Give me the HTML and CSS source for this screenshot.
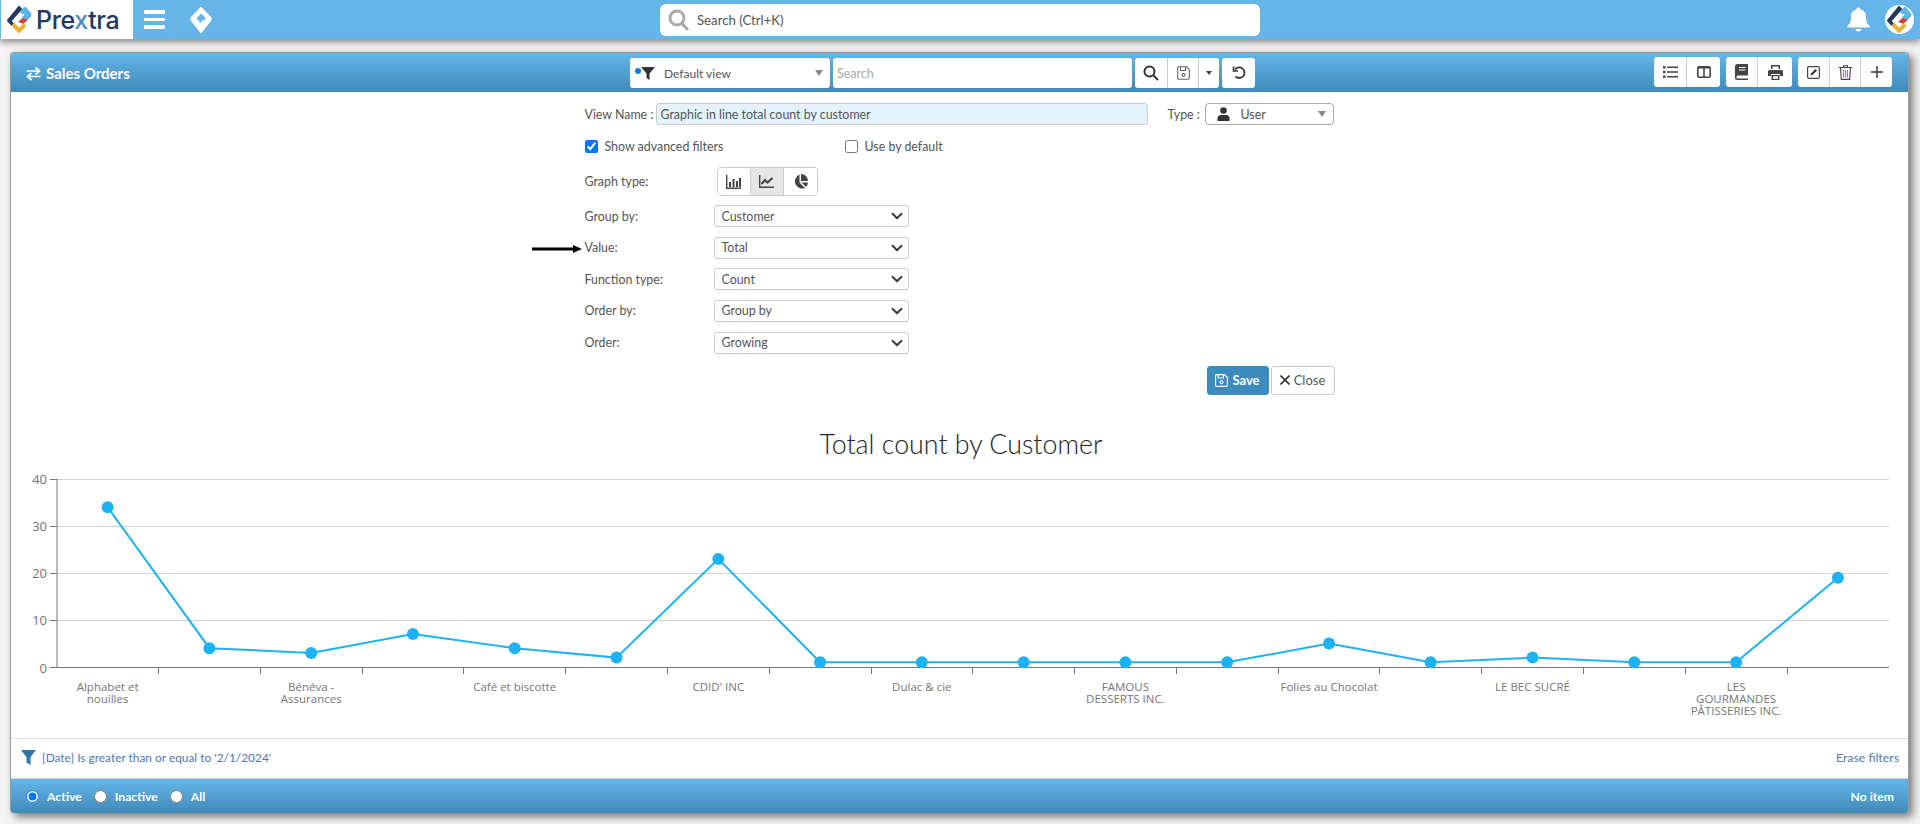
FILE: index.html
```html
<!DOCTYPE html>
<html lang="en">
<head>
  <meta charset="UTF-8">
  <meta name="viewport" content="width=device-width, initial-scale=1.0">
  <title>Sales Orders</title>
  <link rel="stylesheet" href="styles.css">
</head>
<body>
  <svg class="defs" width="0" height="0">
    <symbol id="mark" viewBox="0 0 26 30">
      <path d="M12.500 0.500 16 4 5 16.500 8 20 4.500 21.500 0.500 17Q-0.500 16 0.500 15Z" fill="#24375e"/>
      <path d="M16 4 19 1.500 25 8.500Q26 10 25 11.500L20.500 16.500 15.500 13 18.500 9.500 15.500 9.500 13.500 7Z" fill="#5eb3e6"/>
      <path d="M4.500 21.500 7.500 18 12.500 23.500 17 19 20.500 21.500 12.500 29.500Z" fill="#eab334"/>
      <path d="M11.500 17.500 16 13.500 21.500 15.500 17 19.500Z" fill="#d83a3a"/>
    </symbol>
  </svg>

  <header class="topbar">
    <div class="topbar__left">
      <a class="brand">
        <svg class="brand__mark"><use href="#mark"/></svg>
        <span class="brand__name">Pre<span class="brand__x">x</span>tra</span>
      </a>
      <button class="menu-btn"><span></span><span></span><span></span></button>
      <div class="home-icon">
        <svg width="22" height="28" viewBox="0 0 22 28"><path d="M11 0.500 21 11Q22.500 13 21 15L11 27.500 1 15Q-0.500 13 1 11Z M11 7.500 6.500 12.500 11 17 12 14.500 15 14 15.500 12Z" fill="#fff" fill-rule="evenodd"/></svg>
      </div>
    </div>
    <div class="global-search">
      <svg width="21" height="22" viewBox="0 0 21 22" fill="none" stroke="#aaa" stroke-width="3"><circle cx="9" cy="9" r="7"/><path d="M14 14.500 20 21"/></svg>
      <span>Search (Ctrl+K)</span>
    </div>
    <div class="topbar__right">
      <svg class="bell" width="23" height="25" viewBox="0 0 23 25" fill="#fff"><path d="M11.500 0.500C12.800 0.500 13.500 1.300 13.500 2.500 17 3.300 19 6 19 10 19 15 20.500 17 22.500 19L22.500 20.500H0.500V19C2.500 17 4 15 4 10 4 6 6 3.300 9.500 2.500 9.500 1.300 10.200 0.500 11.500 0.500Z"/><path d="M8.500 22H14.500C14.500 23.500 13 24.500 11.500 24.500S8.500 23.500 8.500 22Z"/></svg>
      <div class="avatar"><svg width="25" height="29"><use href="#mark"/></svg></div>
    </div>
  </header>

  <main class="page">
    <section class="card">
      <div class="card__head">
        <div class="card__title">
          <svg width="15" height="15" viewBox="0 0 15 15" fill="none" stroke="#fff" stroke-width="1.700"><path d="M0.500 5H13M9.500 1.500 13.500 5 9.500 8.500M14.500 10.500H2M5.500 7 1.500 10.500 5.500 14"/></svg>
          <span>Sales Orders</span>
        </div>
        <div class="view-select">
          <i class="view-select__dot"></i>
          <svg width="14" height="13" viewBox="0 0 14 13" fill="#333"><path d="M0 0H14L8.500 6.500V13L5.500 11V6.500Z"/></svg>
          <span class="view-select__text">Default view</span>
          <i class="caret caret--gray"></i>
        </div>
        <input class="view-search" type="text" placeholder="Search">
        <div class="btn-group">
          <button class="btn-group__item btn-w33">
            <svg width="16" height="16" viewBox="0 0 16 16" fill="none" stroke="#333" stroke-width="2"><circle cx="6.500" cy="6.500" r="5"/><path d="M10.500 10.500 15 15"/></svg>
          </button>
          <button class="btn-group__item btn-w31">
            <svg width="13" height="14" viewBox="0 0 13 14" fill="none" stroke="#666" stroke-width="1.100"><path d="M1.500 0.700H9.500L12.300 3.500V11.800Q12.300 13.300 11 13.300H2Q0.700 13.300 0.700 12V1.500Z"/><path d="M3.500 1V4.500H8.500V1"/><circle cx="6.500" cy="9" r="1.500"/></svg>
          </button>
          <button class="btn-group__item btn-w20"><i class="caret caret--dark"></i></button>
        </div>
        <div class="btn-group">
          <button class="btn-group__item btn-w33">
            <svg width="14" height="14" viewBox="0 0 14 14" fill="none" stroke="#333" stroke-width="1.800"><path d="M3.500 10.500A5.300 5.300 0 1 0 3 3.500"/><path d="M1.500 0.500V5H6" stroke-width="1.600"/></svg>
          </button>
        </div>
        <div class="card__actions">
          <div class="btn-group">
            <button class="btn-group__item btn-w33">
              <svg width="15" height="12" viewBox="0 0 15 12" fill="#444"><path d="M0 0H2.500V2.500H0ZM0 4.700H2.500V7.200H0ZM0 9.400H2.500V11.900H0ZM4 0.500H15V2H4ZM4 5.200H15V6.700H4ZM4 9.900H15V11.400H4Z"/></svg>
            </button>
            <button class="btn-group__item btn-w33">
              <svg width="14" height="12" viewBox="0 0 14 12" fill="none" stroke="#444"><rect x="0.800" y="0.800" width="12.400" height="10.400" rx="1.500" stroke-width="1.600"/><path d="M7 1V11" stroke-width="1.600"/><path d="M1 1.500H13" stroke-width="2"/></svg>
            </button>
          </div>
          <div class="btn-group">
            <button class="btn-group__item btn-w32">
              <svg width="13" height="16" viewBox="0 0 13 16"><path d="M2.500 0H13V11.500H2.500Q1.500 11.500 1.500 13T2.500 14.500H13V16H2.500Q0 16 0 13.500V2.500Q0 0 2.500 0Z" fill="#444"/><path d="M4 3.500H10.500M4 6H10.500" stroke="#fff" stroke-width="1.200"/></svg>
            </button>
            <button class="btn-group__item btn-w34">
              <svg width="15" height="15" viewBox="0 0 15 15" fill="#444"><path d="M3 0H12V4H10.500V1.500H4.500V4H3Z"/><path d="M1.500 5H13.500Q15 5 15 6.500V11H12V9H3V11H0V6.500Q0 5 1.500 5Z"/><path d="M3.500 10H11.500V15H3.500ZM5 11.300V13.700H10V11.300Z" fill-rule="evenodd"/></svg>
            </button>
          </div>
          <div class="btn-group">
            <button class="btn-group__item btn-w32">
              <svg width="13" height="13" viewBox="0 0 13 13"><rect x="0.600" y="0.600" width="11.800" height="11.800" rx="1.500" fill="none" stroke="#444" stroke-width="1.200"/><path d="M3.500 9.500 4 7.500 8.500 3 10 4.500 5.500 9Z" fill="#333"/></svg>
            </button>
            <button class="btn-group__item btn-w31">
              <svg width="13" height="15" viewBox="0 0 13 15" fill="none" stroke="#444" stroke-width="1.100"><path d="M0 2.500H13M4.500 2.500V0.800H8.500V2.500"/><path d="M1.500 2.500 2.300 14.400H10.700L11.500 2.500"/><path d="M4.500 5V12.500M6.500 5V12.500M8.500 5V12.500" stroke="#8a7aa8"/></svg>
            </button>
            <button class="btn-group__item btn-w31">
              <svg width="12" height="12" viewBox="0 0 12 12" fill="none" stroke="#333" stroke-width="1.400"><path d="M6 0V12M0 6H12"/></svg>
            </button>
          </div>
        </div>
      </div>

      <div class="view-form">
        <div class="form-row form-row--name">
          <label class="form-row__name">View Name :</label>
          <input class="name-input" type="text" value="Graphic in line total count by customer">
          <label class="form-row__type">Type :</label>
          <div class="type-select">
            <svg width="13" height="14" viewBox="0 0 13 14" fill="#333"><circle cx="6.500" cy="3.500" r="3.300"/><path d="M0.500 14V11.500Q0.500 8 4 8H9Q12.500 8 12.500 11.500V14Z"/></svg>
            <span>User</span>
            <i class="caret caret--gray"></i>
          </div>
        </div>
        <div class="check-row">
          <label class="check check--first"><input type="checkbox" checked>Show advanced filters</label>
          <label class="check"><input type="checkbox">Use by default</label>
        </div>
        <div class="field-list">
          <div class="field field--graph">
            <span class="field__label">Graph type:</span>
            <div class="graph-types">
              <button class="graph-types__item">
                <svg width="15" height="14" viewBox="0 0 15 14"><path d="M0.700 0V13.300H15" fill="none" stroke="#444" stroke-width="1.400"/><path d="M3 7H5V12H3ZM6.500 4H8.500V12H6.500ZM10 6H12V12H10ZM13 3H15V12H13Z" fill="#444"/></svg>
              </button>
              <button class="graph-types__item graph-types__item--on">
                <svg width="15" height="13" viewBox="0 0 15 13" fill="none" stroke="#444"><path d="M0.700 0V12.300H15" stroke-width="1.400"/><path d="M2.500 9 6 5 8.500 7.500 13.500 3" stroke-width="2"/></svg>
              </button>
              <button class="graph-types__item">
                <svg width="15" height="15" viewBox="0 0 15 15" fill="#444"><path d="M6.500 0.500V8.500L12 14A7 7 0 1 1 6.500 0.500Z"/><path d="M8 0A7 7 0 0 1 15 7H8Z"/><path d="M8.500 8.500H15A7 7 0 0 1 13 13Z"/></svg>
              </button>
            </div>
          </div>
          <div class="field">
            <span class="field__label">Group by:</span>
            <select class="field__select"><option>Customer</option></select>
          </div>
          <div class="field">
            <span class="field__label">Value:</span>
            <select class="field__select"><option>Total</option></select>
            <svg class="field__arrow" width="50" height="10" viewBox="0 0 50 10"><path d="M0 3.500H41V1L50 5 41 9V6.500H0Z" fill="#000"/></svg>
          </div>
          <div class="field">
            <span class="field__label">Function type:</span>
            <select class="field__select"><option>Count</option></select>
          </div>
          <div class="field">
            <span class="field__label">Order by:</span>
            <select class="field__select"><option>Group by</option></select>
          </div>
          <div class="field">
            <span class="field__label">Order:</span>
            <select class="field__select"><option>Growing</option></select>
          </div>
        </div>
        <div class="form-actions">
          <button class="btn btn--save">
            <svg width="13" height="13" viewBox="0 0 13 13" fill="none" stroke="#fff" stroke-width="1.100"><path d="M1.500 0.600H9.500L12.400 3.500V11.500Q12.400 12.400 11.500 12.400H1.500Q0.600 12.400 0.600 11.500V1.500Q0.600 0.600 1.500 0.600Z"/><path d="M3.200 1V4H8.500V1"/><circle cx="6.500" cy="8.300" r="1.500"/></svg>
            Save
          </button>
          <button class="btn btn--close">
            <svg width="10" height="10" viewBox="0 0 10 10" fill="none" stroke="#333" stroke-width="1.600"><path d="M0.500 0.500 9.500 9.500M9.500 0.500 0.500 9.500"/></svg>
            Close
          </button>
        </div>
      </div>

      <svg class="chart" width="1897" height="325" viewBox="11 413 1897 325">
        <text class="chart__title" x="961" y="454" text-anchor="middle">Total count by Customer</text>
        <path class="chart__grid" d="M57 479.500H1889M57 526.500H1889M57 573.500H1889M57 620.500H1889"/>
        <path class="chart__axis" d="M57 479V667.500M57 667.500H1889M50 479.500H57M50 526.500H57M50 573.500H57M50 620.500H57M50 667.500H57M158.500 667V674M260.500 667V674M362.500 667V674M463.500 667V674M565.500 667V674M667.500 667V674M769.500 667V674M871.500 667V674M972.500 667V674M1074.500 667V674M1176.500 667V674M1278.500 667V674M1379.500 667V674M1481.500 667V674M1583.500 667V674M1685.500 667V674M1787.500 667V674"/>
        <g class="chart__ylabels" text-anchor="end">
          <text x="47" y="484">40</text>
          <text x="47" y="531">30</text>
          <text x="47" y="578">20</text>
          <text x="47" y="625">10</text>
          <text x="47" y="673">0</text>
        </g>
        <polyline class="chart__line" points="107.600,507.200 209.400,648.200 311.200,652.900 412.900,634.100 514.700,648.200 616.500,657.600 718.300,558.900 820.100,662.300 921.800,662.300 1023.600,662.300 1125.400,662.300 1227.200,662.300 1329,643.500 1430.700,662.300 1532.500,657.600 1634.300,662.300 1736.100,662.300 1837.900,577.700"/>
        <g class="chart__points">
          <circle cx="107.600" cy="507.200" r="6"/>
          <circle cx="209.400" cy="648.200" r="6"/>
          <circle cx="311.200" cy="652.900" r="6"/>
          <circle cx="412.900" cy="634.100" r="6"/>
          <circle cx="514.700" cy="648.200" r="6"/>
          <circle cx="616.500" cy="657.600" r="6"/>
          <circle cx="718.300" cy="558.900" r="6"/>
          <circle cx="820.100" cy="662.300" r="6"/>
          <circle cx="921.800" cy="662.300" r="6"/>
          <circle cx="1023.600" cy="662.300" r="6"/>
          <circle cx="1125.400" cy="662.300" r="6"/>
          <circle cx="1227.200" cy="662.300" r="6"/>
          <circle cx="1329" cy="643.500" r="6"/>
          <circle cx="1430.700" cy="662.300" r="6"/>
          <circle cx="1532.500" cy="657.600" r="6"/>
          <circle cx="1634.300" cy="662.300" r="6"/>
          <circle cx="1736.100" cy="662.300" r="6"/>
          <circle cx="1837.900" cy="577.700" r="6"/>
        </g>
        <g class="chart__xlabels" text-anchor="middle">
          <text x="107.600" y="691">Alphabet et</text>
          <text x="107.600" y="703">nouilles</text>
          <text x="311.200" y="691">Bénéva -</text>
          <text x="311.200" y="703">Assurances</text>
          <text x="514.700" y="691">Café et biscotte</text>
          <text x="718.300" y="691">CDID' INC</text>
          <text x="921.800" y="691">Dulac &amp; cie</text>
          <text x="1125.400" y="691">FAMOUS</text>
          <text x="1125.400" y="703">DESSERTS INC.</text>
          <text x="1329" y="691">Folies au Chocolat</text>
          <text x="1532.500" y="691">LE BEC SUCRÉ</text>
          <text x="1736.100" y="691">LES</text>
          <text x="1736.100" y="703">GOURMANDES</text>
          <text x="1736.100" y="715">PÂTISSERIES INC.</text>
        </g>
      </svg>

      <div class="filter-bar">
        <svg width="15" height="15" viewBox="0 0 15 15" fill="#2f75ad"><path d="M0 0H15L9.500 7V15L5.500 12.500V7Z"/></svg>
        <span class="filter-bar__text">[Date] Is greater than or equal to '2/1/2024'</span>
        <a class="filter-bar__erase">Erase filters</a>
      </div>

      <div class="card__foot">
        <label class="foot-radio"><input type="radio" name="state" checked>Active</label>
        <label class="foot-radio"><input type="radio" name="state">Inactive</label>
        <label class="foot-radio"><input type="radio" name="state">All</label>
        <span class="card__count">No item</span>
      </div>
    </section>
  </main>
</body>
</html>
```

FILE: styles.css
```css
* {
  box-sizing: border-box;
}
html, body {
  margin: 0;
  height: 100%;
}
body {
  background: #f4f4f4;
  font-family: "Lato", "Liberation Sans", sans-serif;
  font-size: 12.400px;
  color: #555;
  overflow: hidden;
}
button {
  font-family: inherit;
  cursor: pointer;
}
.defs {
  position: absolute;
}

/* top bar */
.topbar {
  height: 39px;
  display: grid;
  grid-template-columns: 660px 600px 1fr;
  align-items: center;
  background: #65b5e8;
  box-shadow: 0 3px 7px rgba(0, 0, 0, .45);
  position: relative;
}
.topbar__left {
  display: flex;
  height: 39px;
}
.brand {
  width: 133px;
  display: flex;
  align-items: center;
  gap: 4px;
  padding-left: 6px;
  background: #fff;
  border-left: 1px solid #65b5e8;
}
.brand__mark {
  width: 25px;
  height: 29px;
}
.brand__name {
  font-family: "Inter", "Liberation Sans", sans-serif;
  font-size: 25px;
  font-weight: 500;
  letter-spacing: -0.4px;
  color: #24375e;
}
.brand__x {
  color: #4f8fc4;
}
.menu-btn {
  width: 43px;
  display: flex;
  flex-direction: column;
  justify-content: center;
  align-items: center;
  gap: 4px;
  padding: 0;
  background: none;
  border: 0;
  border-right: 1px solid #8fa9bd;
}
.menu-btn span {
  display: block;
  width: 21px;
  height: 3.500px;
  border-radius: 1px;
  background: #fff;
}
.home-icon {
  width: 49px;
  display: flex;
  align-items: center;
  justify-content: center;
}
.global-search {
  height: 32px;
  display: flex;
  align-items: center;
  gap: 8px;
  padding-left: 8px;
  background: #fff;
  border-radius: 6px;
  font-size: 13.200px;
  color: #555;
}
.topbar__right {
  display: flex;
  justify-content: flex-end;
  align-items: center;
  gap: 15px;
  padding-right: 6px;
}
.avatar {
  width: 29px;
  height: 29px;
  display: flex;
  align-items: center;
  justify-content: center;
  border-radius: 50%;
  background: #fff;
}

/* card */
.page {
  padding: 13px 11px 0 10px;
}
.card {
  height: 761px;
  display: flex;
  flex-direction: column;
  background: #fff;
  border: 1px solid #999;
  border-bottom: 0;
  border-radius: 4px;
  box-shadow: 4px 4px 8px rgba(0, 0, 0, .5);
}
.card__head {
  flex: none;
  height: 39px;
  display: flex;
  align-items: center;
  gap: 3px;
  padding: 1px 16px 0 0;
  background: linear-gradient(#65b5e8, #3f8ab9);
  border-radius: 3px 3px 0 0;
}
.card__title {
  width: 616px;
  display: flex;
  align-items: center;
  gap: 5px;
  padding-left: 15px;
  font-size: 15px;
  font-weight: 700;
  color: #fff;
}
.view-select {
  width: 200px;
  height: 30px;
  display: flex;
  align-items: center;
  padding: 0 7px 0 5px;
  background: #fff;
  border-radius: 3px;
  position: relative;
}
.view-select__dot {
  width: 6px;
  height: 6px;
  margin-bottom: 5px;
  border-radius: 50%;
  background: #0a7cf0;
}
.view-select__text {
  margin-left: 9px;
  font-size: 12px;
}
.caret {
  display: block;
  width: 0;
  height: 0;
  border-left: 4px solid transparent;
  border-right: 4px solid transparent;
  border-top: 6px solid #888;
}
.caret--gray {
  margin-left: auto;
}
.caret--dark {
  border-top-color: #444;
  border-left-width: 3.500px;
  border-right-width: 3.500px;
  border-top-width: 4px;
}
.view-search {
  width: 299px;
  height: 30px;
  padding: 0 4px;
  border: 0;
  border-radius: 3px;
  font-family: inherit;
  font-size: 12.500px;
}
.view-search::placeholder {
  color: #aaa;
}
.btn-group {
  display: flex;
  height: 30px;
  background: #fff;
  border-radius: 3px;
}
.btn-group__item {
  display: flex;
  align-items: center;
  justify-content: center;
  padding: 0;
  background: none;
  border: 0;
  border-right: 1px solid #ccc;
}
.btn-group__item:last-child {
  border-right: 0;
}
.btn-w33 { width: 33px; }
.btn-w31 { width: 31px; }
.btn-w32 { width: 32px; }
.btn-w34 { width: 34px; }
.btn-w20 { width: 20px; }
.card__actions {
  margin: -2px 0 0 auto;
  display: flex;
  gap: 6px;
}

/* form */
.view-form {
  flex: none;
  width: 750px;
  height: 321px;
  margin: 0 auto;
  padding-top: 11px;
}
.form-row {
  display: flex;
  align-items: center;
  height: 22px;
}
.form-row__name {
  width: 71px;
  white-space: nowrap;
}
.name-input {
  width: 492px;
  height: 22px;
  padding: 0 4px;
  background: #e4f3fb;
  border: 1px solid #ccc;
  border-radius: 3px;
  font-family: inherit;
  font-size: 12.400px;
  color: #555;
}
.form-row__type {
  margin-left: 20px;
  width: 37px;
}
.type-select {
  width: 129px;
  height: 22px;
  display: flex;
  align-items: center;
  padding: 0 7px 0 11px;
  border: 1px solid #aaa;
  border-radius: 4px;
}
.type-select span {
  margin-left: 11px;
}
.check-row {
  display: flex;
  height: 17px;
  margin-top: 13px;
  align-items: center;
}
.check {
  display: flex;
  align-items: center;
  gap: 7px;
}
.check--first {
  width: 260px;
}
.check input {
  margin: 0;
}
.field-list {
  display: flex;
  flex-direction: column;
  gap: 9.650px;
  margin-top: 12px;
}
.field {
  display: flex;
  align-items: center;
  position: relative;
}
.field--graph {
  margin-bottom: -0.650px;
}
.field__label {
  width: 129px;
}
.field__select {
  appearance: none;
  width: 195px;
  height: 22px;
  padding: 0 0 0 7px;
  background: #fff url("data:image/svg+xml,%3Csvg xmlns='http://www.w3.org/2000/svg' viewBox='0 0 16 16'%3E%3Cpath fill='none' stroke='%23343a40' stroke-linecap='round' stroke-linejoin='round' stroke-width='2.500' d='m2 5 6 6 6-6'/%3E%3C/svg%3E") no-repeat right 5px center / 12px 12px;
  border: 1px solid #ccc;
  border-radius: 3px;
  font-family: inherit;
  font-size: 12.400px;
  color: #555;
}
.field__arrow {
  position: absolute;
  left: -53px;
  top: 7px;
}
.graph-types {
  display: flex;
  height: 29px;
  margin-left: 3px;
  border: 1px solid #ccc;
  border-radius: 4px;
}
.graph-types__item {
  width: 33px;
  display: flex;
  align-items: center;
  justify-content: center;
  padding: 0;
  background: #fff;
  border: 0;
  border-right: 1px solid #ccc;
  border-radius: 3px;
}
.graph-types__item:last-child {
  border-right: 0;
}
.graph-types__item--on {
  background: #e6e6e6;
  border-radius: 0;
}
.form-actions {
  display: flex;
  justify-content: flex-end;
  gap: 2px;
  margin-top: 12.400px;
}
.btn {
  height: 29px;
  display: flex;
  align-items: center;
  justify-content: center;
  gap: 4px;
  padding: 0;
  border-radius: 3px;
  font-size: 13px;
}
.btn--save {
  width: 62px;
  background: #3c8bbd;
  border: 1px solid #3c8bbd;
  color: #fff;
  font-weight: 700;
}
.btn--close {
  width: 64px;
  background: #fff;
  border: 1px solid #ccc;
  color: #555;
}

/* chart */
.chart {
  flex: none;
  display: block;
}
.chart__title {
  font-family: "Lato", sans-serif;
  font-weight: 300;
  font-size: 26.800px;
  fill: #232323;
}
.chart__grid {
  fill: none;
  stroke: #d3d3d3;
}
.chart__axis {
  fill: none;
  stroke: #767676;
}
.chart__ylabels, .chart__xlabels {
  font-family: "Open Sans", sans-serif;
  font-size: 11.500px;
  fill: #767676;
}
.chart__ylabels {
  font-size: 13px;
}
.chart__line {
  fill: none;
  stroke: #1db2f5;
  stroke-width: 2;
}
.chart__points {
  fill: #1db2f5;
}

/* filter bar and footer */
.filter-bar {
  flex: none;
  height: 40px;
  display: flex;
  align-items: center;
  gap: 6px;
  padding: 0 9px 2px 10px;
  border-top: 1px solid #ddd;
  color: #4f78b4;
  font-size: 11.900px;
}
.filter-bar__erase {
  margin-left: auto;
  font-size: 12.300px;
}
.card__foot {
  flex: 1;
  display: flex;
  align-items: center;
  padding: 0 14px 0 15px;
  background: linear-gradient(#65b5e8, #3f8ab9);
  border-top: 1px solid #ccc;
  border-radius: 0 0 3px 3px;
  color: #fff;
  font-size: 12.200px;
  font-weight: 700;
}
.foot-radio {
  display: flex;
  align-items: center;
  gap: 8px;
  margin-right: 12px;
}
.foot-radio input {
  margin: 0;
}
.card__count {
  margin-left: auto;
}
```
